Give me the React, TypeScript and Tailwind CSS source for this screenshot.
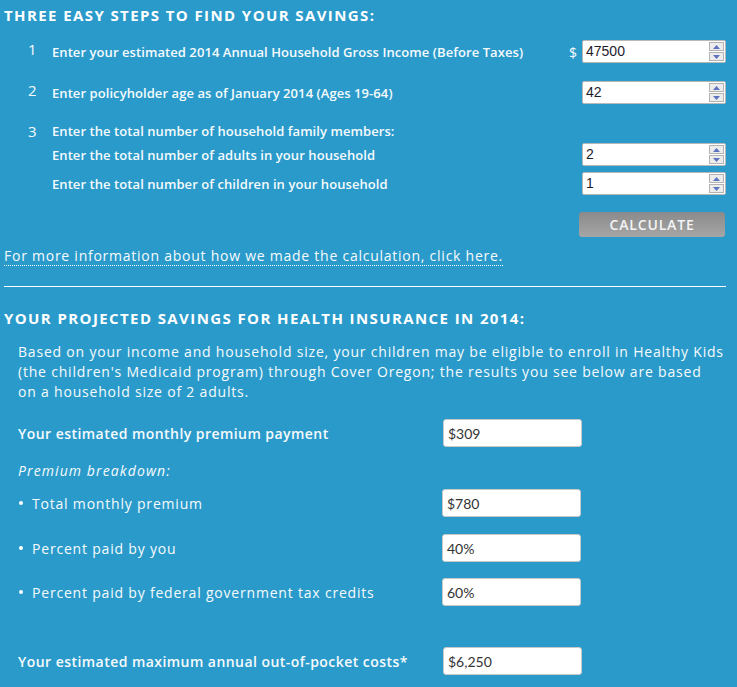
import React from 'react'

const Spinner = () => (
  <div className="flex flex-col gap-px mr-[1px] my-[1px]">
    {['up', 'down'].map((d) => (
      <div
        key={d}
        className="w-[15px] h-[9px] bg-[#ececec] border border-[#b3b3b3] flex items-center justify-center"
      >
        <svg width="7" height="4" viewBox="0 0 7 4">
          {d === 'up' ? (
            <polygon points="3.5,0 7,4 0,4" fill="#5f72c2" />
          ) : (
            <polygon points="0,0 7,0 3.5,4" fill="#5f72c2" />
          )}
        </svg>
      </div>
    ))}
  </div>
)

const NumberBox = ({ value }: { value: string }) => (
  <div className="w-[144px] h-[23px] bg-white border border-[#b8b8b8] rounded-[2px] flex items-center justify-between">
    <span className="pl-[3px] text-[14px] text-[#1c1c2c] font-['Liberation_Sans',Arial,sans-serif]">
      {value}
    </span>
    <Spinner />
  </div>
)

const ResultBox = ({ value }: { value: string }) => (
  <div className="w-[139px] h-[28px] bg-white border border-[#c9c9c9] rounded-[3px] flex items-center pl-[4px] text-[14px] text-[#333] font-['Lato',sans-serif]">
    {value}
  </div>
)

const Step = ({ num, label, children }: { num?: string; label: string; children?: React.ReactNode }) => (
  <div className="flex h-[23px]">
    <div className="w-[52px] pl-[28px] pt-[1px] text-[15px] leading-[16px]">{num}</div>
    <div className="flex-1 self-center pt-[3px] text-[13px] font-semibold tracking-[0.07px]">{label}</div>
    {children}
  </div>
)

export default function App() {
  return (
    <div className="min-h-[687px] bg-[#2a9acb] text-[#f6fafc] font-['Open_Sans',sans-serif] pt-[5px] pr-[11px]">
      <h2 className="pl-[4px] text-[15px] leading-[20px] font-bold tracking-[1.4px] text-white">
        THREE EASY STEPS TO FIND YOUR SAVINGS:
      </h2>

      <div className="mt-[15px]">
        <Step num="1" label="Enter your estimated 2014 Annual Household Gross Income (Before Taxes)">
          <span className="self-center pt-[2px] mr-[5px] text-[14px]">$</span>
          <NumberBox value="47500" />
        </Step>
      </div>
      <div className="mt-[18px]">
        <Step num="2" label="Enter policyholder age as of January 2014 (Ages 19-64)">
          <NumberBox value="42" />
        </Step>
      </div>

      <div className="mt-[19px] flex leading-[16px]">
        <div className="w-[52px] pl-[28px] text-[15px]">3</div>
        <div className="text-[13px] font-semibold tracking-[0.07px]">
          Enter the total number of household family members:
        </div>
      </div>
      <div className="mt-[4px]">
        <Step label="Enter the total number of adults in your household">
          <NumberBox value="2" />
        </Step>
      </div>
      <div className="mt-[6px]">
        <Step label="Enter the total number of children in your household">
          <NumberBox value="1" />
        </Step>
      </div>

      <div className="mt-[17px] flex justify-end pr-[1px]">
        <button className="w-[146px] h-[25px] rounded-[3px] bg-gradient-to-b from-[#8a8a8a] to-[#a6a6a6] text-[14px] font-semibold tracking-[0.06em] text-[#f4f4f4]">
          CALCULATE
        </button>
      </div>

      <div className="mt-[9px] pl-[4px] text-[14px] leading-[20px] tracking-[0.75px]">
        <a href="#" className="border-b border-dotted border-white">
          For more information about how we made the calculation, click here.
        </a>
      </div>

      <hr className="mt-[20px] ml-[4px] border-0 h-px bg-white" />

      <h2 className="mt-[21px] pl-[4px] text-[15px] leading-[20px] font-bold tracking-[1.4px] text-white">
        YOUR PROJECTED SAVINGS FOR HEALTH INSURANCE IN 2014:
      </h2>

      <div className="pl-[18px]">
        <p className="mt-[14px] w-[708px] text-[14px] leading-[20px] tracking-[0.8px]">
          Based on your income and household size, your children may be eligible to enroll in Healthy Kids
          (the children's Medicaid program) through Cover Oregon; the results you see below are based
          <br />
          on a household size of 2 adults.
        </p>

        <div className="mt-[17px] flex items-center">
          <div className="w-[425px] text-[14px] font-semibold tracking-[0.45px]">
            Your estimated monthly premium payment
          </div>
          <ResultBox value="$309" />
        </div>

        <div className="mt-[14px] text-[14px] leading-[20px] italic tracking-[1.1px]">Premium breakdown:</div>

        {[
          { label: 'Total monthly premium', value: '$780', mt: 'mt-[8px]' },
          { label: 'Percent paid by you', value: '40%', mt: 'mt-[17px]' },
          { label: 'Percent paid by federal government tax credits', value: '60%', mt: 'mt-[16px]' },
        ].map((row) => (
          <div key={row.label} className={`${row.mt} flex items-center`}>
            <div className="w-[424px] flex items-center text-[14px] tracking-[0.8px]">
              <span className="w-[4px] h-[4px] rounded-full bg-white ml-[1px] mr-[9px]"></span>
              {row.label}
            </div>
            <ResultBox value={row.value} />
          </div>
        ))}

        <div className="mt-[41px] flex items-center">
          <div className="w-[425px] text-[14px] font-semibold tracking-[0.45px]">
            Your estimated maximum annual out-of-pocket costs*
          </div>
          <ResultBox value="$6,250" />
        </div>
      </div>
    </div>
  )
}
